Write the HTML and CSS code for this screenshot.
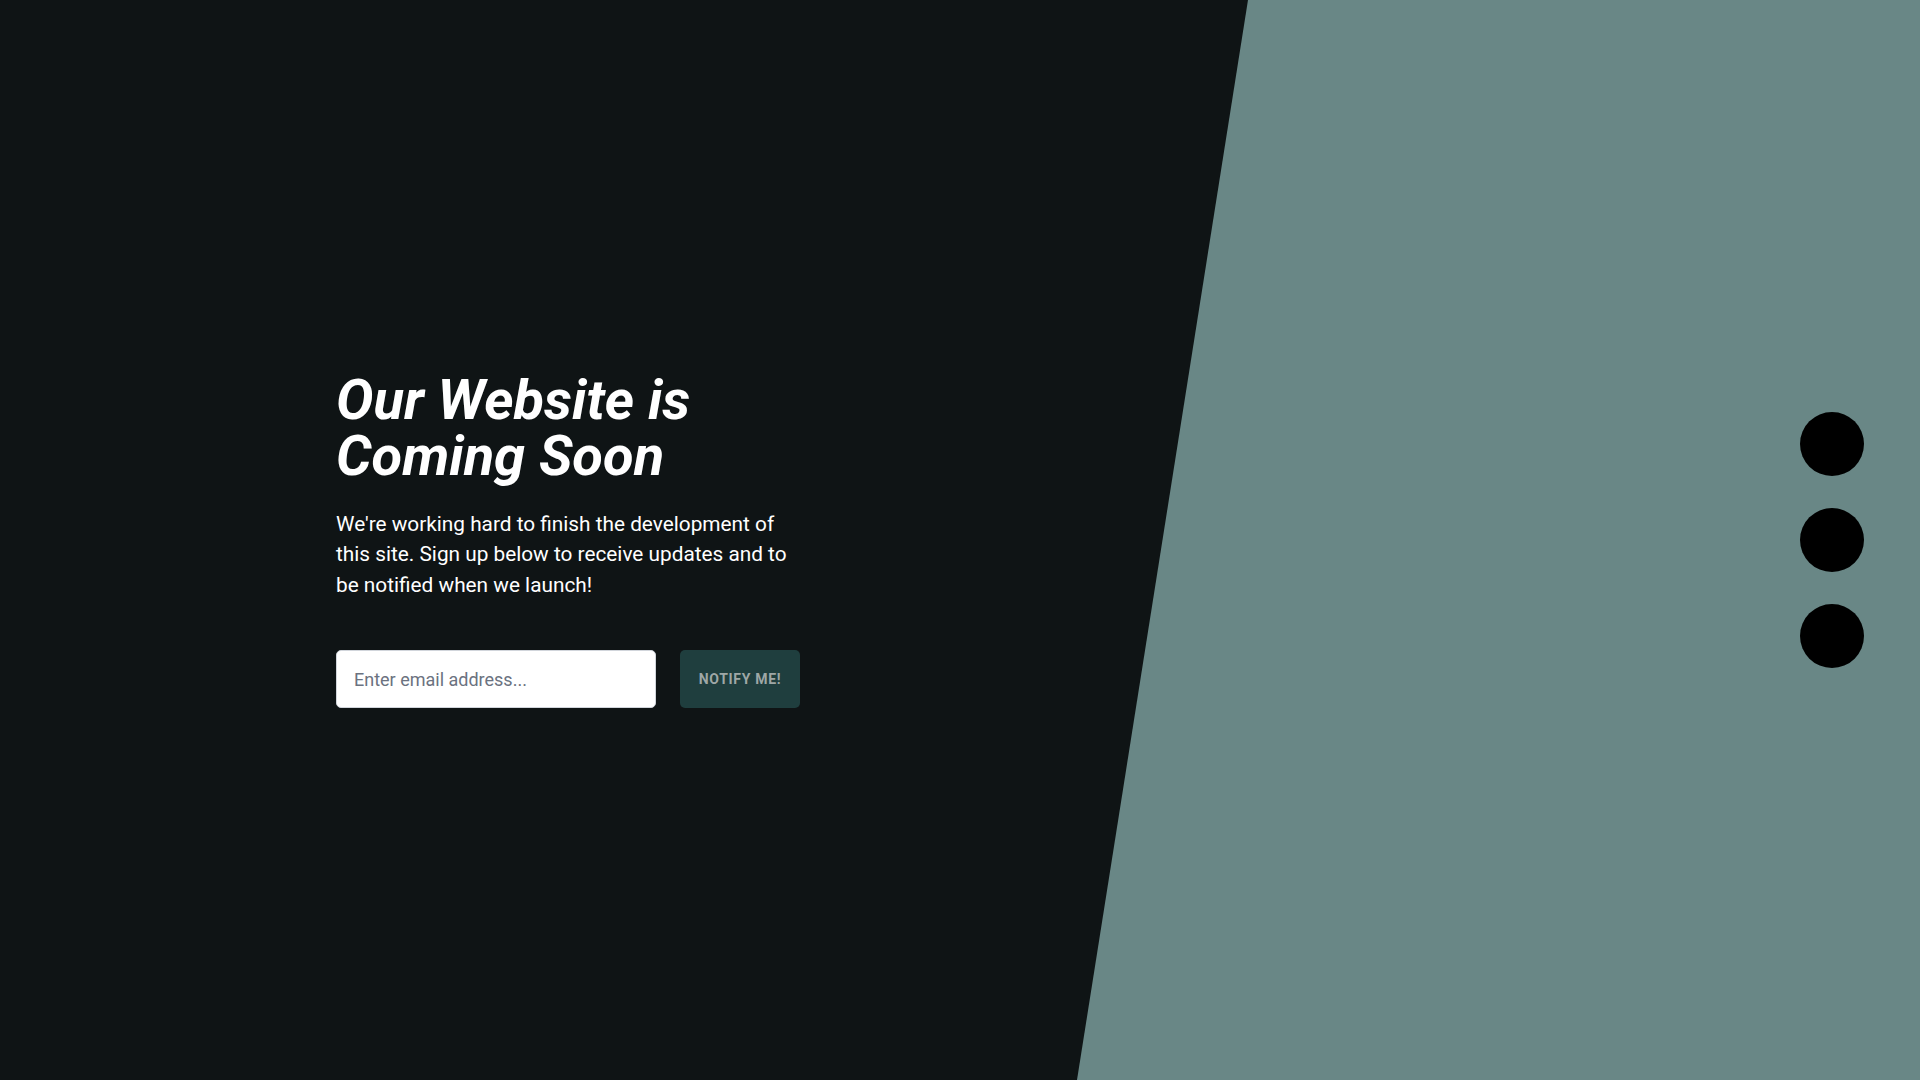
FILE: index.html
```html
<!DOCTYPE html>
<html lang="en">
<head>
<meta charset="utf-8">
<title>Coming Soon</title>
<link rel="stylesheet" href="styles.css">
</head>
<body>
<div class="page">
  <div class="backdrop" aria-hidden="true"></div>
  <main class="content">
    <h1 class="title">Our Website is<br>Coming Soon</h1>
    <p class="lead">We're working hard to finish the development of this site. Sign up below to receive updates and to be notified when we launch!</p>
    <form class="signup">
      <input class="email" type="email" placeholder="Enter email address...">
      <button class="notify" type="button">NOTIFY ME!</button>
    </form>
  </main>
  <nav class="dots">
    <span class="dot"></span>
    <span class="dot"></span>
    <span class="dot"></span>
  </nav>
</div>
</body>
</html>
```

FILE: styles.css
```css
* { box-sizing: border-box; }
html, body { margin: 0; padding: 0; }
body {
  background: #0f1415;
  font-family: Roboto, "Liberation Sans", sans-serif;
  color: #ffffff;
  overflow: hidden;
}
.page {
  position: relative;
  height: 100vh;
  display: flex;
  align-items: center;
}
.backdrop {
  position: absolute;
  inset: 0;
  background: #698786;
  clip-path: polygon(1248px 0, 100% 0, 100% 100%, 1077px 100%);
  z-index: 0;
}
.content {
  position: relative;
  z-index: 1;
  width: 464px;
  margin-left: 336px;
}
.title {
  margin: 0;
  font-size: 56px;
  line-height: 56px;
  font-weight: 700;
  font-style: italic;
  color: #ffffff;
}
.lead {
  margin: 25px 0 0;
  font-size: 20.8px;
  line-height: 30.6px;
  color: #ffffff;
}
.signup {
  display: flex;
  gap: 24px;
  margin-top: 50px;
}
.email {
  width: 320px;
  height: 58px;
  padding: 0 17px;
  border: 1px solid #d1d5db;
  border-radius: 5px;
  background: #ffffff;
  font-family: Roboto, "Liberation Sans", sans-serif;
  font-size: 18px;
  color: #111827;
  outline: none;
}
.email::placeholder { color: #6b7280; }
.notify {
  width: 120px;
  height: 58px;
  border: 0;
  border-radius: 5px;
  background: #1f3e3e;
  color: #9ea7a6;
  font-family: Roboto, "Liberation Sans", sans-serif;
  font-size: 14px;
  font-weight: 700;
  letter-spacing: 0.05em;
  padding: 0;
}
.dots {
  position: relative;
  z-index: 1;
  margin-left: auto;
  margin-right: 56px;
  display: flex;
  flex-direction: column;
  gap: 32px;
}
.dot {
  display: block;
  width: 64px;
  height: 64px;
  border-radius: 50%;
  background: #000000;
}
```
